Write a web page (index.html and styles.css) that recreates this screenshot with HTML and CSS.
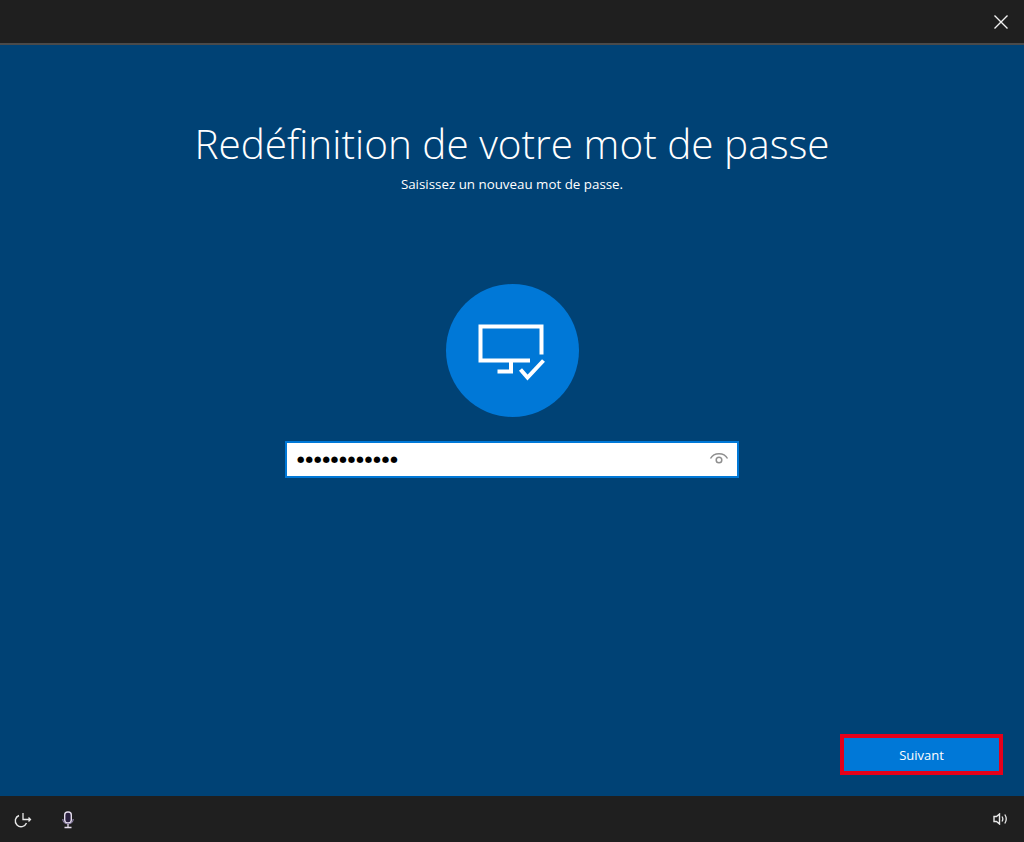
FILE: index.html
```html
<!DOCTYPE html>
<html lang="fr">
<head>
<meta charset="utf-8">
<title>Redéfinition de votre mot de passe</title>
<link rel="stylesheet" href="styles.css">
</head>
<body>
<div class="screen">
  <header class="topbar">
    <button class="icon-btn" aria-label="Fermer">
      <svg width="16" height="16" viewBox="0 0 16 16"><path d="M1.500 1.500l13 13M14.500 1.500l-13 13" stroke="#f2f2f2" stroke-width="1.400" fill="none"/></svg>
    </button>
  </header>
  <main class="content">
    <h1 class="title">Redéfinition de votre mot de passe</h1>
    <p class="subtitle">Saisissez un nouveau mot de passe.</p>
    <div class="avatar">
      <svg width="133" height="133" viewBox="0 0 133 133">
        <path d="M84 76.500H34.500V42.500H95.500V70.500" fill="none" stroke="#fff" stroke-width="4"/>
        <path d="M65 76.500V87.500H51.500" fill="none" stroke="#fff" stroke-width="4"/>
        <path d="M74.500 85.500L81.500 93.500L97.500 76.500" fill="none" stroke="#fff" stroke-width="4"/>
      </svg>
    </div>
    <div class="field">
      <span class="dots">●●●●●●●●●●●●</span>
      <svg class="eye" width="20" height="14" viewBox="0 0 20 14"><path d="M1.500 7.500C5 1 15 1 18.500 7.500" fill="none" stroke="#8f8f8f" stroke-width="1.500"/><circle cx="10" cy="9" r="2.800" fill="none" stroke="#8f8f8f" stroke-width="1.500"/></svg>
    </div>
    <div class="actions">
      <button class="next">Suivant</button>
    </div>
  </main>
  <footer class="bottombar">
    <div class="bottom-left">
      <svg width="18" height="18" viewBox="0 0 18 18"><path d="M5 5.500A5.800 5.800 0 1 0 12.500 13" fill="none" stroke="#e8e8e8" stroke-width="1.400"/><path d="M9 3V9.500H16.500M14.500 7.500L16.500 9.500L14.500 11.500" fill="none" stroke="#e8e8e8" stroke-width="1.300"/></svg>
      <svg width="18" height="20" viewBox="0 0 18 20"><rect x="5.700" y="3" width="6.600" height="11" rx="3" fill="#2b2140" stroke="#e4dcec" stroke-width="1.400"/><path d="M3.800 10c0 6.500 10.400 6.500 10.400 0" fill="none" stroke="#8d80a8" stroke-width="1.200"/><path d="M9 15V18.500M5.500 18.500h7" fill="none" stroke="#e4dcec" stroke-width="1.300"/></svg>
    </div>
    <svg width="15" height="12" viewBox="0 0 15 12"><path d="M1 3.500H3.500L6.500 1V11L3.500 8.500H1Z" fill="none" stroke="#e8e8e8" stroke-width="1.400"/><path d="M9 3.500c1 1.500 1 3.500 0 5M11.800 1.500c1.800 2.800 1.800 6.200 0 9" fill="none" stroke="#e8e8e8" stroke-width="1.300"/></svg>
  </footer>
</div>
</body>
</html>
```
FILE: styles.css
```css
html, body {
  margin: 0;
  padding: 0;
  height: 100%;
  overflow: hidden;
}
.screen {
  width: 1024px;
  height: 842px;
  display: flex;
  flex-direction: column;
  background: #004275;
  color: #fff;
  font-family: "Open Sans", "Liberation Sans", sans-serif;
}
.topbar {
  height: 43px;
  flex: none;
  background: #1f1f1f;
  border-bottom: 2px solid #4a4a4a;
  display: flex;
  justify-content: flex-end;
  align-items: center;
  padding-right: 15px;
}
.icon-btn {
  background: none;
  border: 0;
  padding: 0;
  display: flex;
}
.content {
  flex: 1;
  display: flex;
  flex-direction: column;
  align-items: center;
  padding: 0 21px 21px;
  min-height: 0;
}
.title {
  margin: 73px 0 0;
  font-size: 40.500px;
  line-height: 52px;
  font-weight: 300;
  white-space: nowrap;
}
.subtitle {
  margin: 5px 0 0;
  font-size: 13.350px;
  line-height: 18px;
}
.avatar {
  margin-top: 91px;
  width: 133px;
  height: 133px;
  border-radius: 50%;
  background: #0078d7;
  overflow: hidden;
}
.avatar svg {
  display: block;
}
.field {
  margin-top: 24px;
  box-sizing: border-box;
  width: 454px;
  height: 37px;
  background: #fff;
  border: 2px solid #0078d7;
  display: flex;
  align-items: center;
  justify-content: space-between;
  padding: 0 8px 0 10px;
}
.dots {
  color: #000;
  font-family: "DejaVu Sans", sans-serif;
  font-size: 8.500px;
  letter-spacing: 1.050px;
  padding-bottom: 2px;
}
.eye {
  margin-bottom: 4px;
}
.actions {
  margin-top: auto;
  align-self: flex-end;
}
.next {
  display: block;
  box-sizing: border-box;
  width: 163px;
  height: 41px;
  background: #0078d7;
  color: #fff;
  border: 4px solid #e5001a;
  font-family: inherit;
  font-size: 13px;
  padding: 0;
}
.bottombar {
  height: 46px;
  flex: none;
  background: #1f1f1f;
  display: flex;
  align-items: center;
  justify-content: space-between;
  padding: 0 16px 0 14px;
}
.bottom-left {
  display: flex;
  align-items: center;
  gap: 27px;
}
```
